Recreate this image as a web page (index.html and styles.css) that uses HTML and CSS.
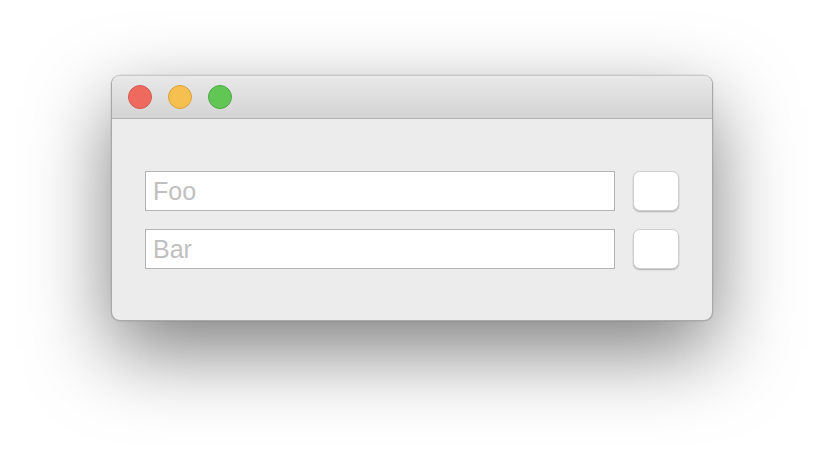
FILE: index.html
```html
<!DOCTYPE html>
<html>
<head>
<meta charset="utf-8">
<link rel="stylesheet" href="styles.css">
</head>
<body>
<div class="window">
  <div class="titlebar">
    <span class="light red"></span>
    <span class="light yellow"></span>
    <span class="light green"></span>
  </div>
  <div class="content">
    <div class="row">
      <input class="field" type="text" placeholder="Foo">
      <button class="btn"></button>
    </div>
    <div class="row">
      <input class="field" type="text" placeholder="Bar">
      <button class="btn"></button>
    </div>
  </div>
</div>
</body>
</html>
```
FILE: styles.css
```css
html, body {
  margin: 0;
  padding: 0;
  background: #ffffff;
}
body {
  min-height: 468px;
  box-sizing: border-box;
  padding: 75px 0 0 111px;
  font-family: "Liberation Sans", Arial, sans-serif;
  overflow: hidden;
}
.window {
  width: 602px;
  height: 246px;
  box-sizing: border-box;
  border-radius: 9px;
  background: #ececec;
  border: 1px solid #a9a9a9;
  border-top-color: #c8c8c8;
  box-shadow: 0 30px 80px rgba(0, 0, 0, 0.5), 0 0 0 0.5px rgba(0,0,0,0.1);
  overflow: hidden;
  display: flex;
  flex-direction: column;
}
.titlebar {
  height: 43px;
  flex: none;
  box-sizing: border-box;
  background: linear-gradient(#e9e9e9, #d4d4d4);
  border-bottom: 1px solid #b3b3b3;
  display: flex;
  align-items: center;
  gap: 16px;
  padding: 0 0 0 16px;
}
.light {
  width: 24px;
  height: 24px;
  box-sizing: border-box;
  border-radius: 50%;
}
.red { background: #ee6a5f; border: 1px solid #d45a50; }
.yellow { background: #f5c04f; border: 1px solid #d9a43c; }
.green { background: #62c655; border: 1px solid #4ea844; }
.content {
  padding: 52px 33px 0 33px;
  display: flex;
  flex-direction: column;
  gap: 18px;
}
.row {
  display: flex;
  align-items: center;
  gap: 18px;
}
.field {
  width: 470px;
  height: 40px;
  flex: none;
  box-sizing: border-box;
  margin: 0;
  border: 1px solid #b2b2b2;
  background: #ffffff;
  padding: 0 7px;
  font-family: "Liberation Sans", Arial, sans-serif;
  font-size: 25px;
  color: #333;
  outline: none;
}
.field::placeholder {
  color: #c0c0c0;
}
.btn {
  width: 46px;
  height: 40px;
  flex: none;
  box-sizing: border-box;
  margin: 0;
  padding: 0;
  border: 0.5px solid #cfcfcf;
  border-radius: 7px;
  background: #ffffff;
  box-shadow: 0 1px 1.5px rgba(0,0,0,0.25);
}
```
